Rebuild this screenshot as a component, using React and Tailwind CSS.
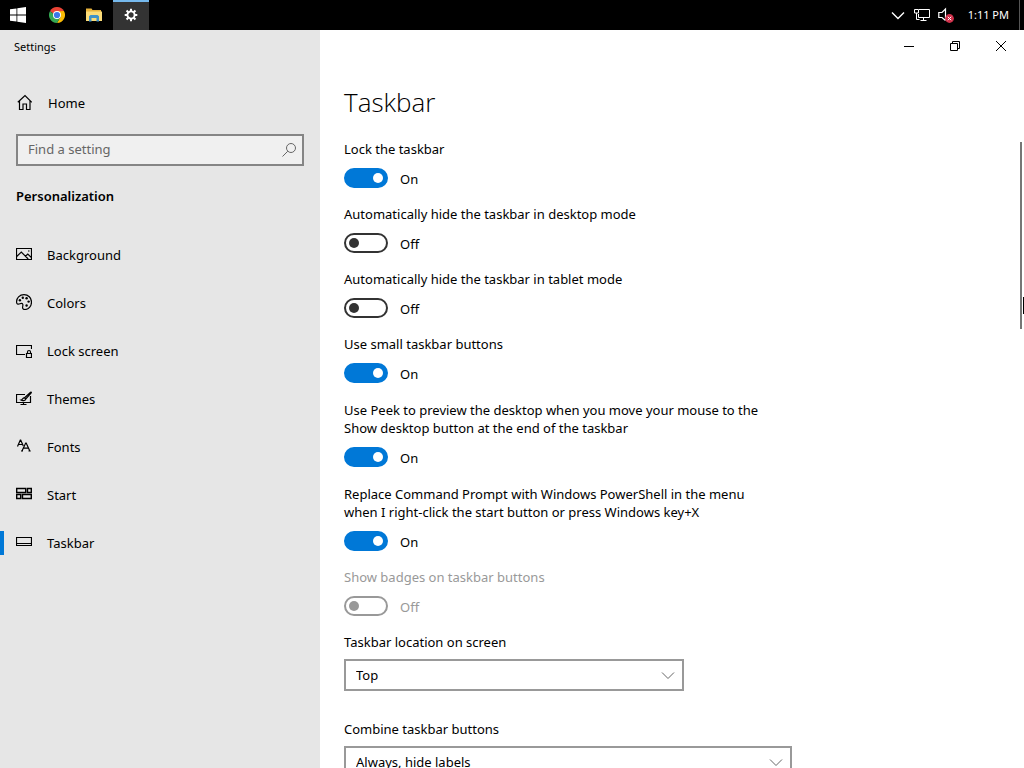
import { useState } from 'react'

const NAV_ITEMS = [
  { id: 'background', label: 'Background', icon: BackgroundIcon },
  { id: 'colors', label: 'Colors', icon: ColorsIcon },
  { id: 'lock', label: 'Lock screen', icon: LockScreenIcon },
  { id: 'themes', label: 'Themes', icon: ThemesIcon },
  { id: 'fonts', label: 'Fonts', icon: FontsIcon },
  { id: 'start', label: 'Start', icon: StartIcon },
  { id: 'taskbar', label: 'Taskbar', icon: TaskbarIcon },
]

const TOGGLES = [
  { id: 'lock-taskbar', label: 'Lock the taskbar', on: true },
  { id: 'hide-desktop', label: 'Automatically hide the taskbar in desktop mode', on: false },
  { id: 'hide-tablet', label: 'Automatically hide the taskbar in tablet mode', on: false },
  { id: 'small-buttons', label: 'Use small taskbar buttons', on: true },
  {
    id: 'peek',
    label: 'Use Peek to preview the desktop when you move your mouse to the Show desktop button at the end of the taskbar',
    on: true,
    multiline: true,
  },
  {
    id: 'powershell',
    label: 'Replace Command Prompt with Windows PowerShell in the menu when I right-click the start button or press Windows key+X',
    on: true,
    multiline: true,
  },
  { id: 'badges', label: 'Show badges on taskbar buttons', on: false, disabled: true },
]

function Icon({ children, className = 'size-4', ...props }) {
  return (
    <svg viewBox="0 0 16 16" fill="none" stroke="currentColor" className={`shrink-0 ${className}`} aria-hidden="true" {...props}>
      {children}
    </svg>
  )
}

function HomeIcon() {
  return (
    <Icon strokeWidth="1.200">
      <path d="M1.800 8.300 9 1.600l6.800 6.700M3.500 7v8.500h3.500V10h3.500v5.500h3.500V7" />
    </Icon>
  )
}

function BackgroundIcon() {
  return (
    <Icon strokeWidth="1.200">
      <path d="M.5 2.500h15v11H.5zM.7 10.500l4.600-4.500 6.900 7M9.500 10.200l2.300-2.200 3.600 3.600" />
      <path d="M12 5h1.500" />
    </Icon>
  )
}

function ColorsIcon() {
  return (
    <Icon strokeWidth="1.200">
      <path d="M.6 8.500C.2 4 3.700.6 8 .6c4.200 0 7.500 3.300 7.500 7.400 0 4.300-3 7.500-6.600 7.500-1.700 0-2.500-.9-2.300-2.400.2-1.200.5-2.200.1-3-.4-.9-1.600-.9-2.700-.4C2.500 10.400.8 10.400.6 8.500z" />
      <g fill="currentColor" stroke="none">
        <circle cx="3.900" cy="6.300" r="1.200" />
        <circle cx="6.800" cy="3.700" r="1.200" />
        <circle cx="10.600" cy="4.300" r="1.200" />
        <circle cx="12.600" cy="7.600" r="1.200" />
        <circle cx="10.600" cy="11.500" r="1.200" />
      </g>
    </Icon>
  )
}

function LockScreenIcon() {
  return (
    <Icon strokeWidth="1.200">
      <path d="M9 12.500H.5v-9h15V7" />
      <path d="M10.500 11.500h5v4h-5zM11.500 11.500V10c0-2 3-2 3 0v1.500" />
    </Icon>
  )
}

function ThemesIcon() {
  return (
    <Icon strokeWidth="1.200">
      <path d="M9 4.500H.5v8h14V6M7.500 12.500v2M4.500 14.500h6" />
      <path fill="#999" d="M14.600 2.200 8.500 7.800l1.200 1.300 5.500-6.200c.4-.6-.1-1-.6-.7z" />
      <path d="M8.500 7.900c-2-.2-1.700 2-3.500 2.200 1.500 1 4.500.7 4.700-1" />
    </Icon>
  )
}

function FontsIcon() {
  return (
    <Icon strokeWidth="1.200">
      <path d="M1.500 8.500 4.300 2h.4l2.600 6M2.500 6.500h4" />
      <path d="M6 13 9.700 5h.5l3.600 8M7.300 10.200h5.300M5 13h2M12.500 13h2.200" />
    </Icon>
  )
}

function StartIcon() {
  return (
    <Icon strokeWidth="1.400">
      <path d="M.7 2.500h9v4h-9zM11.500 2.500h3.800v4h-3.800zM.7 8.500h4v4h-4zM6.500 8.500h8.800v4H6.500z" />
    </Icon>
  )
}

function TaskbarIcon() {
  return (
    <Icon strokeWidth="1.200">
      <path d="M.5 3.500h15v8H.5zM.5 9.500h15" />
    </Icon>
  )
}

function ChevronDown({ className, ...props }) {
  return (
    <Icon className={className} {...props}>
      <path d="m2 5.500 6 6 6-6" />
    </Icon>
  )
}

function ChromeLogo() {
  return (
    <svg viewBox="0 0 16 16" className="size-4" aria-hidden="true">
      <path fill="#ea4335" d="M8 8 1.070 4A8 8 0 0 1 14.930 4z" />
      <path fill="#fbbc05" d="M14.930 4A8 8 0 0 1 8 16l3.460-6L8 4z" />
      <path fill="#34a853" d="M1.070 4A8 8 0 0 0 8 16l3.460-6H8z" />
      <path fill="#ea4335" d="M1.070 4H14.930L8 4.400 5 7z" />
      <circle cx="8" cy="8" r="4" fill="#fff" />
      <circle cx="8" cy="8" r="3.100" fill="#3b78e7" />
    </svg>
  )
}

function FolderLogo() {
  return (
    <svg viewBox="0 0 16 16" className="size-4" aria-hidden="true">
      <path fill="#e8b33c" d="M0 1.500h5.500l1 1.500H15v4H0z" />
      <path fill="#fbdc79" d="M0 4.500h16v9.500H0z" />
      <path fill="#3f92c8" d="M3 14.500V9.300L4.500 8h7L13 9.300v5.200h-2.500V11h-5v3.500z" />
    </svg>
  )
}

function GearIcon() {
  return (
    <svg viewBox="0 0 16 16" className="size-4" fill="none" stroke="#fff" aria-hidden="true">
      <circle cx="8" cy="8" r="3.600" strokeWidth="1.900" />
      <path
        strokeWidth="2"
        d="M8 1.700v2.500M8 11.800v2.500M1.700 8h2.500M11.800 8h2.500M3.550 3.550l1.700 1.700M10.750 10.750l1.700 1.700M3.550 12.450l1.700-1.700M10.750 5.250l1.700-1.700"
      />
    </svg>
  )
}

function SystemTaskbar() {
  return (
    <header className="flex h-[30px] shrink-0 bg-black text-white">
      <button aria-label="Start" className="flex w-9 items-center justify-center">
        <svg viewBox="0 0 16 16" className="size-4" fill="#fff" aria-hidden="true">
          <path d="M0 2.300 6.500 1.400v6.200H0zM7.300 1.300 16 0v7.600H7.300zM0 8.400h6.500v6.200L0 13.700zM7.300 8.400H16V16l-8.700-1.300z" />
        </svg>
      </button>
      <div className="flex pl-[3px]">
        <button aria-label="Google Chrome" className="flex w-9 items-center justify-center"><ChromeLogo /></button>
        <button aria-label="File Explorer" className="flex w-[38px] items-center justify-center"><FolderLogo /></button>
        <button aria-label="Settings" className="flex w-9 items-center justify-center border-t-2 border-[#76b9ed] bg-[#333] pb-0.5">
          <GearIcon />
        </button>
      </div>

      {/* Notification area */}
      <div className="ml-auto flex items-center">
        <button aria-label="Show hidden icons" className="flex w-6 justify-center">
          <ChevronDown className="size-4" strokeWidth="1.400" />
        </button>
        <button aria-label="Network" className="flex w-6 justify-center">
          <Icon>
            <path d="M5 2.500h10.500v8h-11V7M.5 2.500h4v3.500h-4zM2.500 6v6.500h3M9.500 10.500v3M6.500 13.500h6" />
          </Icon>
        </button>
        <button aria-label="Volume muted" className="flex w-6 justify-center">
          <Icon>
            <path strokeWidth="1.200" d="M7.500 13.500 4 10.500H.8v-5H4L7.500 2v11" />
            <circle cx="11.500" cy="11.500" r="4.400" fill="#d0304a" stroke="none" />
            <path stroke="#fff" d="m9.800 9.800 3.400 3.400M13.200 9.800l-3.400 3.400" />
          </Icon>
        </button>
        <time className="pr-2.5 pl-2.5 text-[11px]">1:11 PM</time>
        <button aria-label="Show desktop" className="h-full w-[5px] border-l border-[#555]" />
      </div>
    </header>
  )
}

function Sidebar({ active, onSelect }) {
  return (
    <aside className="flex w-80 shrink-0 flex-col bg-[#e6e6e6]">
      <div className="flex h-8 items-center px-3.5 pt-0.5 text-[11px]">Settings</div>
      <a href="#home" className="mt-[17px] flex h-12 items-center gap-4 px-4">
        <span className="pb-0.5"><HomeIcon /></span>
        Home
      </a>
      <div className="relative mx-4 mt-[7px]">
        <input
          type="text"
          aria-label="Find a setting"
          placeholder="Find a setting"
          className="block h-8 w-full border-2 border-[#858585] bg-[#f0f0f0] pr-8 pb-0.5 pl-2.5 outline-none placeholder:text-[#666]"
        />
        <Icon className="pointer-events-none absolute top-2 right-[7px] size-4 text-[#666]">
          <circle cx="10" cy="6" r="4.500" />
          <path d="M6.800 9.200 1.500 14.500" />
        </Icon>
      </div>
      <h2 className="mt-[21px] px-4 leading-[18px] font-semibold">Personalization</h2>
      <nav className="mt-[26px]">
        {NAV_ITEMS.map(({ id, label, icon: NavIcon }) => (
          <a key={id} href={`#${id}`} onClick={() => onSelect(id)} className="flex h-12 items-center">
            <span className={`h-6 w-1 ${active === id ? 'bg-[#0078d7]' : ''}`} />
            <span className="flex items-center gap-[15px] pl-3">
              <span className="pb-0.5"><NavIcon /></span>
              {label}
            </span>
          </a>
        ))}
      </nav>
    </aside>
  )
}

function Toggle({ id, label, on, disabled, multiline }) {
  const [checked, setChecked] = useState(on)

  return (
    <div className={disabled ? 'text-[#999]' : ''}>
      <label htmlFor={id} className={multiline ? 'block max-w-[432px] pt-px' : 'block'}>{label}</label>
      <div className="mt-2.5 flex h-5 items-center gap-3">
        <input
          id={id}
          type="checkbox"
          role="switch"
          checked={checked}
          disabled={disabled}
          onChange={(e) => setChecked(e.target.checked)}
          className="flex h-5 w-11 appearance-none items-center rounded-full border-2 border-[#333] px-[3px] before:size-2.5 before:rounded-full before:bg-[#333] checked:justify-end checked:border-[#0078d7] checked:bg-[#0078d7] checked:before:bg-white disabled:border-[#999] disabled:before:bg-[#999]"
        />
        <span className="pt-0.5">{checked ? 'On' : 'Off'}</span>
      </div>
    </div>
  )
}

function Dropdown({ id, label, options, className }) {
  return (
    <div>
      <label htmlFor={id} className="block">{label}</label>
      <div className={`relative mt-2 max-w-full ${className}`}>
        <select id={id} className="block h-8 w-full appearance-none border-2 border-[#999] bg-white pr-8 pl-2.5 outline-none">
          {options.map((o) => <option key={o}>{o}</option>)}
        </select>
        <ChevronDown className="pointer-events-none absolute top-2 right-2 size-4 text-[#666]" />
      </div>
    </div>
  )
}

function WindowControls() {
  return (
    <div className="flex h-8 shrink-0 justify-end">
      <button aria-label="Minimize" className="flex w-[46px] items-center justify-center">
        <Icon><path d="M3 8.500h10" /></Icon>
      </button>
      <button aria-label="Restore" className="flex w-[46px] items-center justify-center">
        <Icon><path d="M3.500 5.500h7v7h-7zM5.500 5.500v-2h7v7h-2" /></Icon>
      </button>
      <button aria-label="Close" className="flex w-[46px] items-center justify-center">
        <Icon><path d="m3 3 10 10M13 3 3 13" /></Icon>
      </button>
    </div>
  )
}

export default function App() {
  const [active, setActive] = useState('taskbar')

  return (
    <div className="flex h-screen flex-col overflow-hidden bg-white font-['Noto_Sans','Open_Sans',sans-serif] text-[13px] leading-[18px] text-black">
      <SystemTaskbar />
      <div className="flex min-h-0 flex-1">
        <Sidebar active={active} onSelect={setActive} />
        <main className="relative flex min-w-0 flex-1 flex-col">
          <WindowControls />
          <div className="min-h-0 flex-1 overflow-hidden px-6 pt-6">
            <h1 className="font-['Open_Sans',sans-serif] text-[26px] leading-8 font-light">Taskbar</h1>
            <div className="mt-[22px] flex max-w-[448px] flex-col gap-[17px]">
              {TOGGLES.map((t) => <Toggle key={t.id} {...t} />)}
              <Dropdown id="location" label="Taskbar location on screen" options={['Top', 'Left', 'Right', 'Bottom']} className="w-[340px]" />
              <div className="pt-3">
                <Dropdown
                  id="combine"
                  label="Combine taskbar buttons"
                  options={['Always, hide labels', 'When taskbar is full', 'Never']}
                  className="w-[448px]"
                />
              </div>
            </div>
          </div>

          {/* Thin scroll thumb and the pointer resting at the edge */}
          <div className="absolute top-28 right-0.5 h-[187px] w-0.5 bg-[#767676]" />
          <div className="absolute top-[267px] right-0 h-[17px] w-px bg-black" />
        </main>
      </div>
    </div>
  )
}
